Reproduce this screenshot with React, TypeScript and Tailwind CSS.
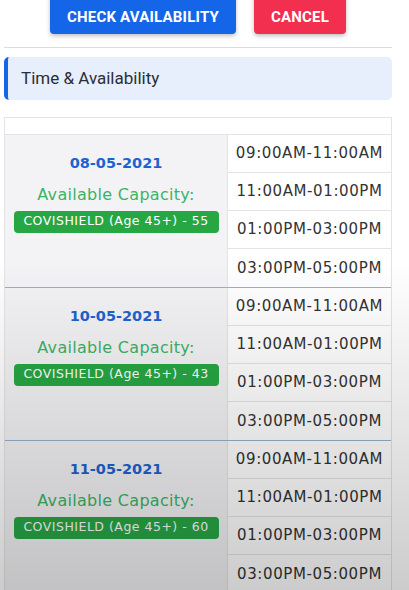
export default function App() {
  const slots = ["09:00AM-11:00AM", "11:00AM-01:00PM", "01:00PM-03:00PM", "03:00PM-05:00PM"];
  const days = [
    { id: 1, date: "08-05-2021", vaccine: "COVISHIELD (Age 45+) - 55" },
    { id: 2, date: "10-05-2021", vaccine: "COVISHIELD (Age 45+) - 43" },
    { id: 3, date: "11-05-2021", vaccine: "COVISHIELD (Age 45+) - 60" },
  ];
  return (
    <div className="relative w-[409px] h-[590px] overflow-hidden bg-white">
      <div className="w-[388px] ml-[4px]">
        <div className="flex justify-center gap-[18px] -mt-[10px]">
          <button className="w-[186px] h-[44px] rounded-[4px] bg-[#1565e9] text-white text-[15px] font-bold pt-[10px] tracking-[0.2px] shadow-[0_2px_4px_rgba(0,0,0,0.25)] font-['Roboto',sans-serif]">
            CHECK AVAILABILITY
          </button>
          <button className="w-[92px] h-[44px] rounded-[4px] bg-[#f22f4e] text-white text-[15px] font-bold pt-[10px] tracking-[0.2px] shadow-[0_2px_4px_rgba(0,0,0,0.25)] font-['Roboto',sans-serif]">
            CANCEL
          </button>
        </div>
        <div className="mt-[13px] h-px bg-[#dcdcdc]" />
        <div className="mt-[9px] h-[43px] flex items-center rounded-[5px] border-l-[4px] border-[#1565e9] bg-[#e7eefc] pl-[13px] text-[17px] text-[#2a2f36] font-['Roboto',sans-serif]">
          Time &amp; Availability
        </div>
        <div className="mt-[17px] border border-[#e4e4e4] font-['DejaVu_Sans',sans-serif]">
          <div className="h-[17px] border-b border-[#e4e4e4]" />
          {days.map((day) => (
            <div key={day.id} className="flex border-b border-[#98b0cf]">
              <div className="w-[222px] bg-[#f3f3f5] flex flex-col items-center pt-[18px]">
                <div className="text-[14.5px] font-bold text-[#1d63cf]">{day.date}</div>
                <div className="mt-[8px] text-[16px] tracking-[0.3px] text-[#3ab465]">Available Capacity:</div>
                <div className="mt-[4px] w-[205px] h-[22px] rounded-[4px] bg-[#27a744] text-white text-[12.5px] flex items-center justify-center tracking-[0.5px]">
                  {day.vaccine}
                </div>
              </div>
              <div className="flex-1 border-l border-[#e4e4e4] bg-white">
                {slots.map((slot, i) => (
                  <div
                    key={slot}
                    className={`h-[38px] flex items-center justify-center text-[15px] tracking-[0.6px] text-[#333333] ${i < 3 ? "border-b border-[#e4e4e4]" : ""}`}
                  >
                    {slot}
                  </div>
                ))}
              </div>
            </div>
          ))}
        </div>
      </div>
      <div className="pointer-events-none absolute left-0 right-0 bottom-0 h-[330px] bg-gradient-to-b from-transparent to-black/20" />
    </div>
  );
}
